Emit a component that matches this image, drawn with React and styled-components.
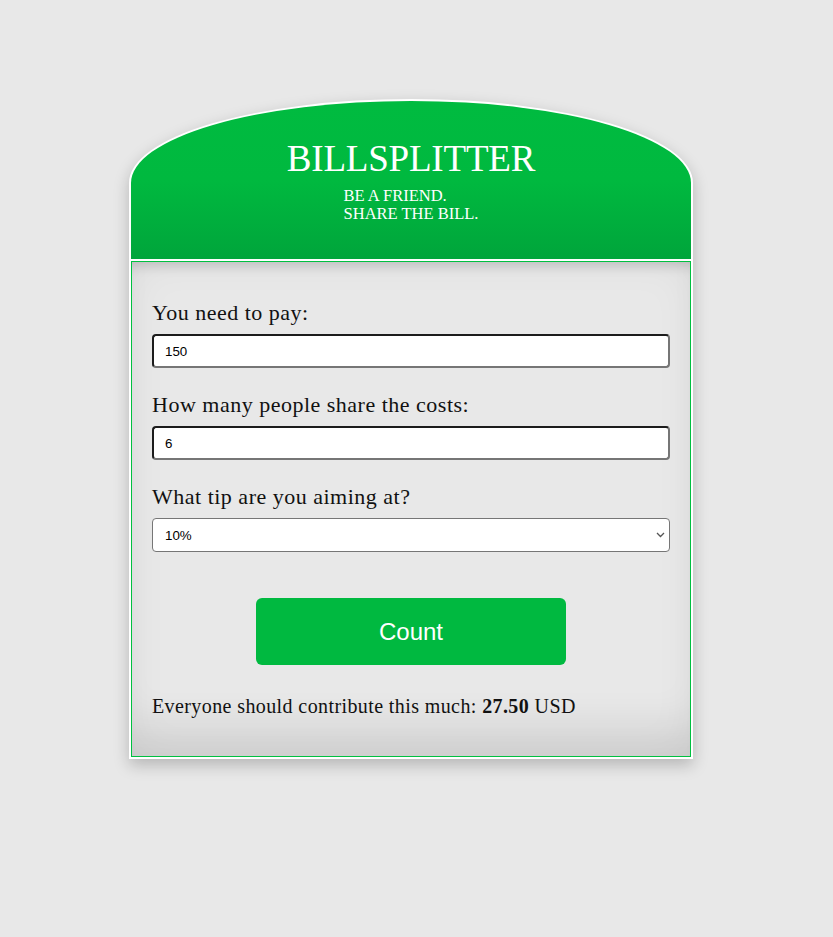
import React from "react";
import styled, { createGlobalStyle } from "styled-components";

const Global = createGlobalStyle`
  html, body { margin: 0; padding: 0; background: #e8e8e8; }
  body { font-family: "Liberation Serif", serif; }
`;

const Page = styled.div`
  padding: 99px 0 0 129px;
  min-height: 937px;
  box-sizing: border-box;
`;

const Card = styled.div`
  width: 564px;
  box-sizing: border-box;
  border: 2px solid #fff;
  background: #fff;
  border-radius: 50% 50% 0 0 / 84px 84px 0 0;
  display: flex;
  flex-direction: column;
  gap: 2px;
  box-shadow: 0 6px 16px rgba(0, 0, 0, 0.22);
`;

const Header = styled.header`
  height: 158px;
  border-radius: 50% 50% 0 0 / 82px 82px 0 0;
  background: linear-gradient(to bottom, #00bb40 0%, #00b93f 50%, #00a53b 100%);
  color: #fff;
  padding-top: 36px;
  box-sizing: border-box;
  display: flex;
  flex-direction: column;
  align-items: center;
`;

const Title = styled.h1`
  margin: 0;
  font-family: "Liberation Serif", serif;
  font-weight: normal;
  font-size: 37px;
  line-height: 44px;
  letter-spacing: -0.2px;
`;

const Tagline = styled.p`
  text-align: left;
  margin: 6px 0 0;
  font-size: 16.5px;
  line-height: 18px;
`;

const Body = styled.main`
  border: 1px solid #00c040;
  background: #e8e8e8;
  padding: 39px 20px 38px 20px;
  box-shadow: inset 0 12px 12px -8px rgba(0, 0, 0, 0.16),
    inset 0 -50px 40px -20px rgba(0, 0, 0, 0.09),
    inset 0 0 40px rgba(0, 0, 0, 0.05);
  display: flex;
  flex-direction: column;
`;

const Field = styled.label`
  display: flex;
  flex-direction: column;
  gap: 9px;
  margin-bottom: 25px;
`;

const LabelText = styled.span`
  font-size: 22px;
  line-height: 24px;
  letter-spacing: 0.5px;
  color: #111;
`;

const Input = styled.input`
  height: 34px;
  box-sizing: border-box;
  border: 2px solid;
  border-color: #1c1c1c #767676 #767676 #1c1c1c;
  border-radius: 4px;
  background: #fff;
  padding: 0 11px;
  font-family: "Liberation Sans", Arial, sans-serif;
  font-size: 13.33px;
  color: #000;
  outline: none;
`;

const SelectWrap = styled.div`
  position: relative;
  display: flex;
`;

const Select = styled.select`
  flex: 1;
  height: 34px;
  box-sizing: border-box;
  border: 1px solid #767676;
  border-radius: 4px;
  background: #fff;
  padding: 0 12px;
  font-family: "Liberation Sans", Arial, sans-serif;
  font-size: 13.33px;
  color: #000;
  appearance: none;
  -webkit-appearance: none;
  outline: none;
`;

const Chevron = styled.svg`
  position: absolute;
  right: 5px;
  top: 14px;
  pointer-events: none;
`;

const Button = styled.button`
  align-self: center;
  margin-top: 21px;
  width: 310px;
  height: 67px;
  border: none;
  border-radius: 6px;
  background: #00b940;
  color: #fff;
  font-family: "Liberation Sans", Arial, sans-serif;
  font-size: 24px;
  cursor: pointer;
`;

const Result = styled.p`
  margin: 29px 0 0;
  font-size: 20px;
  line-height: 24px;
  letter-spacing: 0.4px;
  color: #111;
`;

export default function App() {
  return (
    <>
      <Global />
      <Page>
        <Card>
          <Header>
            <Title>BILLSPLITTER</Title>
            <Tagline>
              BE A FRIEND.
              <br />
              SHARE THE BILL.
            </Tagline>
          </Header>
          <Body>
            <Field>
              <LabelText>You need to pay:</LabelText>
              <Input defaultValue="150" />
            </Field>
            <Field>
              <LabelText>How many people share the costs:</LabelText>
              <Input defaultValue="6" />
            </Field>
            <Field>
              <LabelText>What tip are you aiming at?</LabelText>
              <SelectWrap>
                <Select defaultValue="10">
                  <option value="5">5%</option>
                  <option value="10">10%</option>
                  <option value="15">15%</option>
                  <option value="20">20%</option>
                </Select>
                <Chevron width="9" height="6" viewBox="0 0 9 6">
                  <path d="M1 1 L4.5 4.5 L8 1" fill="none" stroke="#555" strokeWidth="1.3" />
                </Chevron>
              </SelectWrap>
            </Field>
            <Button>Count</Button>
            <Result>
              Everyone should contribute this much: <b>27.50</b> USD
            </Result>
          </Body>
        </Card>
      </Page>
    </>
  );
}
